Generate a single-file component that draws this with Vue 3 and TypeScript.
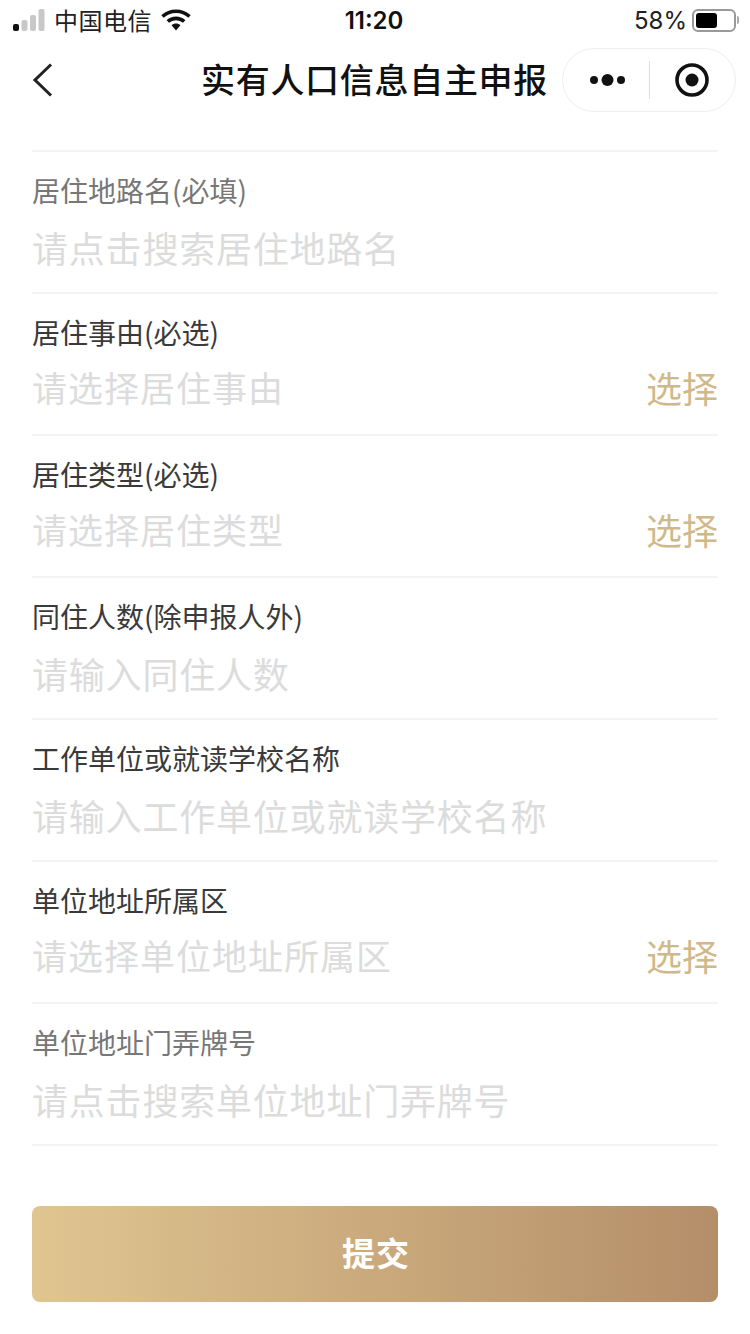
<template>
  <div class="page">
    <div class="statusBar">
      <div class="statusLeft">
        <svg class="signal" width="34" height="22" viewBox="0 0 34 22">
          <rect x="0" y="15" width="6" height="7" rx="2" fill="#111" />
          <rect x="8.5" y="11" width="6" height="11" rx="2" fill="#c8c8c8" />
          <rect x="17" y="6" width="6" height="16" rx="2" fill="#c8c8c8" />
          <rect x="25.500" y="0" width="6" height="22" rx="2" fill="#c8c8c8" />
        </svg>
        <span class="carrier">中国电信</span>
        <svg class="wifi" width="30" height="22" viewBox="0 0 30 22">
          <path d="M1.500 7.500C9 .5 21 .5 28.500 7.500" fill="none" stroke="#111" stroke-width="3.600" />
          <path d="M6.800 12.500C11.500 8.300 18.500 8.300 23.200 12.500" fill="none" stroke="#111" stroke-width="3.600" />
          <path d="M10.500 16.300C13 14 17 14 19.500 16.300L15 21.500Z" fill="#111" />
        </svg>
      </div>
      <span class="time">11:20</span>
      <div class="statusRight">
        <span class="percent">58%</span>
        <span class="battery"><span class="batteryLevel" :style="{ width: '58%' }"></span></span>
        <span class="batteryTip"></span>
      </div>
    </div>

    <div class="navBar">
      <svg class="back" width="22" height="36" viewBox="0 0 22 36">
        <path d="M19 2.500L3 18l16 15.500" fill="none" stroke="#222" stroke-width="3" />
      </svg>
      <h1 class="title">实有人口信息自主申报</h1>
      <div class="capsule">
        <svg width="38" height="14" viewBox="0 0 38 14">
          <circle cx="5" cy="7" r="4" fill="#111" />
          <circle cx="18.500" cy="7" r="6" fill="#111" />
          <circle cx="32" cy="7" r="4" fill="#111" />
        </svg>
        <span class="capsuleLine"></span>
        <svg width="36" height="36" viewBox="0 0 36 36">
          <circle cx="18" cy="18" r="15" fill="none" stroke="#111" stroke-width="3.600" />
          <circle cx="18" cy="18" r="6.500" fill="#111" />
        </svg>
      </div>
    </div>

    <form class="form" @submit.prevent>
      <div v-for="field in fields" :key="field.label" class="row">
        <div class="label" :class="{ muted: field.muted }">{{ field.label }}</div>
        <div class="valueLine" :class="{ hasChoose: field.select }">
          <span class="placeholder">{{ field.placeholder }}</span>
          <span v-if="field.select" class="choose">选择</span>
        </div>
      </div>
      <button type="submit" class="submit">提交</button>
    </form>
  </div>
</template>

<script setup lang="ts">
interface Field {
  label: string;
  placeholder: string;
  select?: boolean;
  muted?: boolean;
}

const fields: Field[] = [
  { label: '居住地路名(必填)', placeholder: '请点击搜索居住地路名', muted: true },
  { label: '居住事由(必选)', placeholder: '请选择居住事由', select: true },
  { label: '居住类型(必选)', placeholder: '请选择居住类型', select: true },
  { label: '同住人数(除申报人外)', placeholder: '请输入同住人数' },
  { label: '工作单位或就读学校名称', placeholder: '请输入工作单位或就读学校名称' },
  { label: '单位地址所属区', placeholder: '请选择单位地址所属区', select: true },
  { label: '单位地址门弄牌号', placeholder: '请点击搜索单位地址门弄牌号', muted: true },
];
</script>

<style>
html,
body {
  margin: 0;
  background: #fff;
}
</style>

<style scoped>
.page {
  width: 750px;
  height: 1334px;
  overflow: hidden;
  background: #fff;
  font-family: "Noto Sans CJK SC", "Liberation Sans", sans-serif;
  color: #111;
}

.statusBar {
  height: 40px;
  display: grid;
  grid-template-columns: 1fr auto 1fr;
  align-items: center;
  padding: 0 11px 0 13px;
}

.statusLeft,
.statusRight {
  display: flex;
  align-items: center;
}

.statusRight {
  justify-content: flex-end;
}

.signal {
  margin-right: 7px;
}

.carrier {
  font-size: 24px;
  line-height: 30px;
  letter-spacing: 0.500px;
  color: #222;
}

.wifi {
  margin-left: 9px;
}

.time {
  font-family: Inter, "Liberation Sans", sans-serif;
  font-size: 24px;
  font-weight: 600;
  color: #111;
  margin-right: 4px;
}

.percent {
  font-family: Inter, "Liberation Sans", sans-serif;
  font-size: 24px;
  color: #222;
  margin-right: 5px;
}

.battery {
  box-sizing: border-box;
  width: 44px;
  height: 23px;
  border: 2px solid #999;
  border-radius: 6px;
  padding: 2px;
  display: flex;
}

.batteryLevel {
  background: #000;
  border-radius: 3px;
}

.batteryTip {
  width: 2px;
  height: 8px;
  background: #aaa;
  border-radius: 0 2px 2px 0;
  margin-left: 1px;
}

.navBar {
  position: relative;
  height: 80px;
  display: flex;
  align-items: center;
  padding: 0 14px 0 32px;
}

.back {
  flex: none;
}

.title {
  margin: 0 0 4px 147px;
  font-size: 34px;
  font-weight: 500;
  letter-spacing: 0.700px;
  white-space: nowrap;
  color: #111;
}

.capsule {
  position: absolute;
  right: 14px;
  top: 8px;
  box-sizing: border-box;
  width: 174px;
  height: 64px;
  border: 1px solid #eee;
  border-radius: 32px;
  display: flex;
  align-items: center;
  justify-content: space-between;
  padding: 0 25px 0 26px;
  background: #fff;
}

.capsuleLine {
  width: 1px;
  height: 38px;
  margin-right: 2px;
  background: #ddd;
}

.form {
  margin: 30px 32px 0;
  border-top: 2px solid #f3f3f3;
}

.row {
  box-sizing: border-box;
  height: 142px;
  border-bottom: 2px solid #f3f3f3;
  padding-top: 18px;
}

.label {
  font-size: 28px;
  line-height: 40px;
  color: #3a3a3a;
  white-space: nowrap;
}

.label.muted {
  color: #777;
}

.valueLine {
  display: flex;
  justify-content: space-between;
  align-items: center;
  margin-top: 14px;
  height: 46px;
}

.valueLine.hasChoose {
  margin-top: 12px;
}

.placeholder {
  font-size: 36px;
  line-height: 46px;
  letter-spacing: 0.800px;
  color: #dcdcdc;
  white-space: nowrap;
}

.hasChoose .placeholder {
  font-size: 35px;
  letter-spacing: 1px;
}

.choose {
  font-size: 36px;
  line-height: 46px;
  color: #cfb98a;
}

.submit {
  display: block;
  width: 100%;
  height: 96px;
  margin-top: 60px;
  padding: 0 0 4px 2px;
  border: 0;
  border-radius: 8px;
  background: linear-gradient(90deg, #e0c591, #b48e68);
  color: #fff;
  font-family: inherit;
  font-size: 33px;
  font-weight: 700;
  letter-spacing: 1px;
}
</style>
